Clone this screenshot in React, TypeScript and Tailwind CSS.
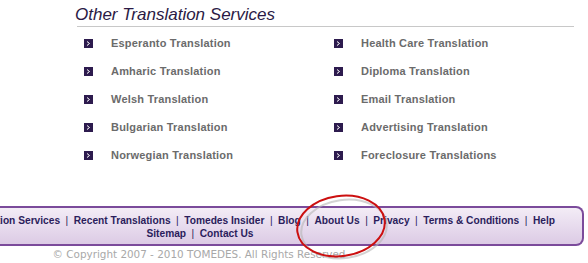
import React from "react";

const left = [
  "Esperanto Translation",
  "Amharic Translation",
  "Welsh Translation",
  "Bulgarian Translation",
  "Norwegian Translation",
];
const right = [
  "Health Care Translation",
  "Diploma Translation",
  "Email Translation",
  "Advertising Translation",
  "Foreclosure Translations",
];

function Bullet() {
  return (
    <span className="flex h-[9px] w-[9px] shrink-0 items-center justify-center bg-[#2d1b4e]">
      <svg width="5" height="5" viewBox="0 0 5 5">
        <path d="M1 0.5 L3.5 2.5 L1 4.5" stroke="#ffffff" strokeWidth="1" fill="none" />
      </svg>
    </span>
  );
}

function Item({ text }: { text: string }) {
  return (
    <div className="flex h-[28px] items-center gap-[18px]">
      <Bullet />
      <span className="text-[11px] font-bold tracking-[0.2px] text-[#6b6b6b]">{text}</span>
    </div>
  );
}

const links = [
  "Translation Services",
  "Recent Translations",
  "Tomedes Insider",
  "Blog",
  "About Us",
  "Privacy",
  "Terms & Conditions",
  "Help",
];

function Sep() {
  return <span className="mx-[5.5px] font-normal">|</span>;
}

export default function App() {
  return (
    <div
      className="relative h-[263px] w-[588px] overflow-hidden bg-white"
      style={{ fontFamily: '"Liberation Sans", Arial, sans-serif' }}
    >
      <div className="pl-[75px] pt-[4px]">
        <h2 className="text-[17px] italic leading-[21px] text-[#2b1a45]">
          Other Translation Services
        </h2>
      </div>
      <div className="ml-[77px] mt-[1px] h-px w-[497px] bg-[#c8c8c8]" />
      <div className="mt-[2px] flex">
        <div className="ml-[84px] w-[250px]">
          {left.map((t) => (
            <Item key={t} text={t} />
          ))}
        </div>
        <div>
          {right.map((t) => (
            <Item key={t} text={t} />
          ))}
        </div>
      </div>

      <div className="mt-[37px] w-[584px] rounded-r-[8px] border-y-2 border-r-2 border-[#7b4b9b] bg-gradient-to-b from-[#f3ecf6] to-[#dccbe5] pb-[4px] pt-[6px] text-[10.2px] font-bold leading-[13px] text-[#2b1d5c]">
        <div className="flex justify-end whitespace-nowrap pr-[27px]">
          {links.map((l, i) => (
            <React.Fragment key={l}>
              {i > 0 && <Sep />}
              <span>{l}</span>
            </React.Fragment>
          ))}
        </div>
        <div className="w-[400px] whitespace-nowrap text-center">
          <span>Sitemap</span>
          <Sep />
          <span>Contact Us</span>
        </div>
      </div>
      <div
        className="mt-[1px] w-[398px] text-center text-[10.4px] leading-[14px] text-[#a8a8a8]"
        style={{ fontFamily: "Verdana, 'DejaVu Sans', sans-serif" }}
      >
        © Copyright 2007 - 2010 TOMEDES. All Rights Reserved
      </div>

      <svg
        className="pointer-events-none absolute left-[290px] top-[190px]"
        width="110"
        height="73"
        viewBox="0 0 110 73"
      >
        <ellipse
          cx="54"
          cy="39"
          rx="43"
          ry="29"
          transform="rotate(-8 54 39)"
          fill="none"
          stroke="#b5b5b5"
          strokeWidth="2"
          opacity="0.6"
        />
        <ellipse
          cx="51"
          cy="36"
          rx="44"
          ry="30"
          transform="rotate(-8 51 36)"
          fill="none"
          stroke="#cc1010"
          strokeWidth="2"
        />
      </svg>
    </div>
  );
}
